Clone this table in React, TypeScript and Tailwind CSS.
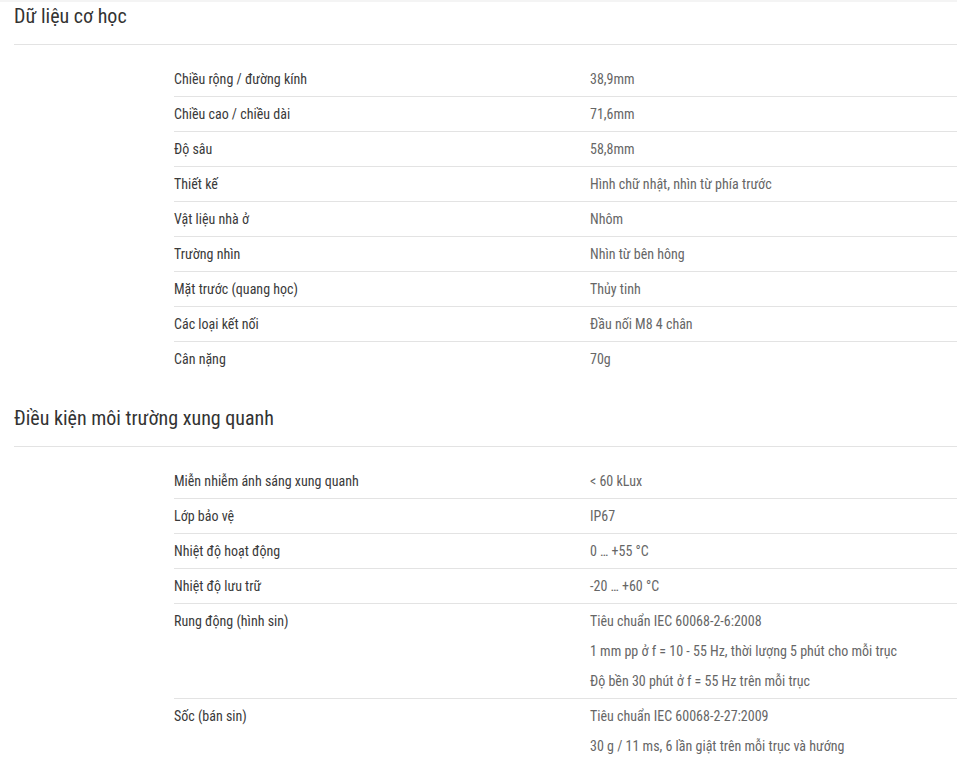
const SECTIONS: { title: string; rows: { label: string; values: string[] }[] }[] = [
  {
    title: "Dữ liệu cơ học",
    rows: [
      { label: "Chiều rộng / đường kính", values: ["38,9mm"] },
      { label: "Chiều cao / chiều dài", values: ["71,6mm"] },
      { label: "Độ sâu", values: ["58,8mm"] },
      { label: "Thiết kế", values: ["Hình chữ nhật, nhìn từ phía trước"] },
      { label: "Vật liệu nhà ở", values: ["Nhôm"] },
      { label: "Trường nhìn", values: ["Nhìn từ bên hông"] },
      { label: "Mặt trước (quang học)", values: ["Thủy tinh"] },
      { label: "Các loại kết nối", values: ["Đầu nối M8 4 chân"] },
      { label: "Cân nặng", values: ["70g"] },
    ],
  },
  {
    title: "Điều kiện môi trường xung quanh",
    rows: [
      { label: "Miễn nhiễm ánh sáng xung quanh", values: ["< 60 kLux"] },
      { label: "Lớp bảo vệ", values: ["IP67"] },
      { label: "Nhiệt độ hoạt động", values: ["0 … +55 °C"] },
      { label: "Nhiệt độ lưu trữ", values: ["-20 … +60 °C"] },
      {
        label: "Rung động (hình sin)",
        values: [
          "Tiêu chuẩn IEC 60068-2-6:2008",
          "1 mm pp ở f = 10 - 55 Hz, thời lượng 5 phút cho mỗi trục",
          "Độ bền 30 phút ở f = 55 Hz trên mỗi trục",
        ],
      },
      {
        label: "Sốc (bán sin)",
        values: ["Tiêu chuẩn IEC 60068-2-27:2009", "30 g / 11 ms, 6 lần giật trên mỗi trục và hướng"],
      },
    ],
  },
];

function SpecRow({ label, values, last }: { label: string; values: string[]; last: boolean }) {
  return (
    <div className={`flex py-[2px] leading-[30px] border-b ${last ? "border-transparent" : "border-[#e3e3e3]"}`}>
      <div className="w-[416px] shrink-0 text-[#3a3a3a]">{label}</div>
      <div className="flex flex-col text-[#666]">
        {values.map((v) => (
          <span key={v}>{v}</span>
        ))}
      </div>
    </div>
  );
}

export default function App() {
  return (
    <div className="min-h-[768px] bg-white pl-[14px] font-['Roboto',sans-serif] font-stretch-condensed text-[14px] border-t-2 border-[#f4f4f4]">
      {SECTIONS.map((s, i) => (
        <section key={s.title} className={i === 0 ? "" : "mt-[27px]"}>
          <h2 className="border-b border-[#e3e3e3] pb-[14px] text-[20px] leading-[28px] text-[#333]">{s.title}</h2>
          <div className="ml-[160px] pt-[17px]">
            {s.rows.map((r, j) => (
              <SpecRow key={r.label} label={r.label} values={r.values} last={j === s.rows.length - 1} />
            ))}
          </div>
        </section>
      ))}
    </div>
  );
}
